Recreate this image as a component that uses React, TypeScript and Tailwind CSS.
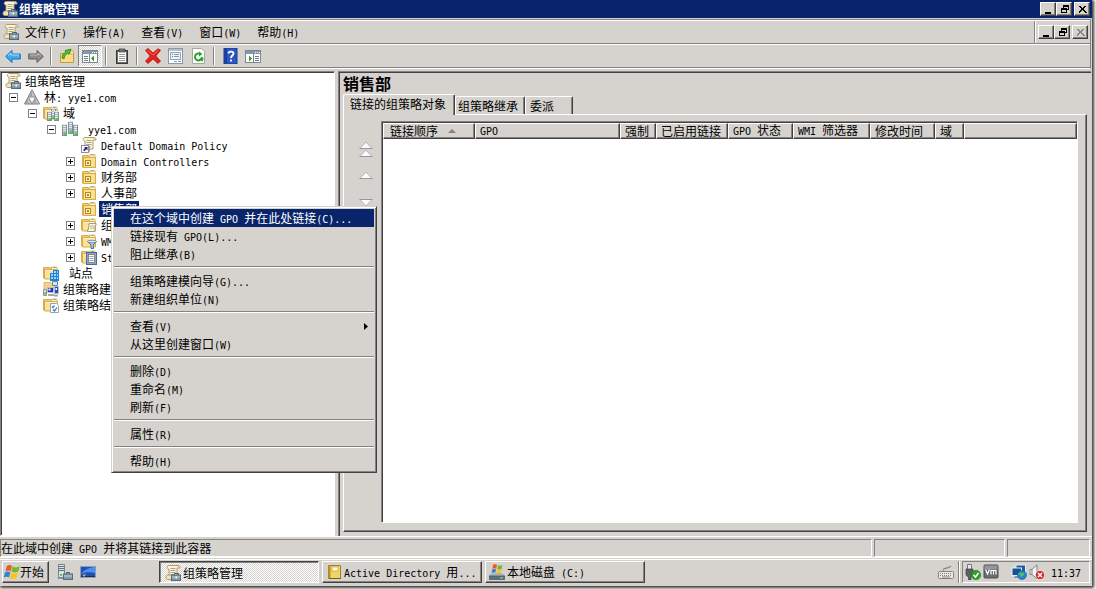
import React from 'react';
import { clsx } from 'clsx';

const RAISED = 'border border-t-white border-l-white border-r-[#424142] border-b-[#424142] shadow-[inset_-1px_-1px_0_#848284] bg-[#d6d3ce]';
const SUNKEN = 'border border-t-[#848284] border-l-[#848284] border-r-white border-b-white';
const DITHER = 'bg-[repeating-conic-gradient(#fff_0_25%,#d6d3ce_0_50%)] bg-[length:2px_2px]';

// Latin runs are set in a half-width face so that two of them fill one Chinese cell
function Label({ children }: { children: string }) {
  const parts = children.split(/([\x20-\x7e]+)/).filter(Boolean);
  return (
    <span className="whitespace-pre">
      {parts.map((part, i) =>
        /[\x20-\x7e]/.test(part) ? (
          <span key={i} className="font-['DejaVu_Sans_Mono',monospace] text-[10px]">{part}</span>
        ) : (
          part
        )
      )}
    </span>
  );
}

function Svg({ children, size = 16 }: { children: React.ReactNode; size?: number }) {
  return (
    <svg width={size} height={size} viewBox="0 0 16 16" className="block shrink-0" aria-hidden="true">
      {children}
    </svg>
  );
}

/* ---------- icons ---------- */

const ScrollShape = () => (
  <>
    <path d="M3.500.5h9.500a2 2 0 0 1 2 2.500h-3v9H4V4C2 4 1.500 1.500 3.500.5z" fill="#fbf3d8" stroke="#b09c68" />
    <path d="M12 3V1.500h2.500V3z" fill="#d9c489" />
    <path d="M5.500 3.500h5M5.500 5.500h5M5.500 7.500h5M5.500 9.500h4" stroke="#aaa289" />
    <path d="M1 12.500c0-1.500.8-2.500 2-2.500h5.500v4.500H2.500c-1 0-1.500-1-1.500-2z" fill="#efe3bb" stroke="#b09c68" />
  </>
);

const PolicyIcon = () => (
  <Svg>
    <ScrollShape />
    <path d="M9.500 10V8.500h4V10" fill="none" stroke="#4a5966" />
    <rect x="6.500" y="10" width="9" height="5.500" fill="#8299ab" stroke="#566a7a" />
    <path d="M7 12h8" stroke="#c3d2dc" />
    <path d="M10.500 11.500h1.500v2h-1.500z" fill="#fff" />
  </Svg>
);

const PolicyLinkIcon = () => (
  <Svg>
    <ScrollShape />
    <rect x=".5" y="8.500" width="7" height="7" fill="#fff" stroke="#8c8ea5" />
    <path d="M3 10h3.500v3.500L5.300 12.300 3.200 14.300 2 13.100l2.100-2z" fill="#1b1d8f" />
  </Svg>
);

const ForestIcon = () => (
  <Svg>
    <path d="M8 .8 15.500 15H.5z" fill="#c6c6c6" stroke="#7d7d7d" />
    <path d="M4.300 8h7.400L8 14.800z" fill="#f8f8f8" stroke="#8a8a8a" />
    <path d="M8 2.500 5.500 7.500H8z" fill="#9f9f9f" />
    <path d="M4 9.500 1.500 14.500H4zM12 9.500 9.500 14.500H12z" fill="#9f9f9f" />
  </Svg>
);

const FolderShape = () => (
  <>
    <path d="M.5 2.500h7l1 1.500v9H.5z" fill="#f3cf72" stroke="#d9ab4a" />
    <path d="M8.500 2h5.500v3H8.500z" fill="#fff3cf" stroke="#d9ab4a" strokeWidth=".8" />
    <path d="M10.500 2.500h2" stroke="#4ba0dd" />
    <path d="M1.500 4.500h13v9.500h-13z" fill="#fbe29a" stroke="#d9ab4a" />
    <path d="M2.500 5.500h11" stroke="#fff4cd" />
  </>
);

const Server = ({ x, y, h }: { x: number; y: number; h: number }) => (
  <g transform={`translate(${x} ${y})`}>
    <rect x=".5" y=".5" width="4" height={h - 1} fill="#a9b6be" stroke="#7f8e97" />
    <path d="M0 .5h5" stroke="#dfe5e8" />
    <path d="M1 2.500h3M1 4.500h3M1 6.500h3" stroke="#e6ebee" />
    <rect x="2" y={h - 3} width="2" height="2" fill="#3fdc1c" />
  </g>
);

const DomainsIcon = () => (
  <Svg>
    <FolderShape />
    <Server x={8} y={3} h={11} />
    <Server x={4} y={6} h={10} />
    <Server x={11} y={6} h={10} />
  </Svg>
);

const DomainIcon = () => (
  <Svg>
    <Server x={6} y={0} h={13} />
    <Server x={0} y={3} h={12} />
    <Server x={11} y={3} h={12} />
  </Svg>
);

const OuIcon = () => (
  <Svg>
    <path d="M1.500 2.500h6l1 2-1 9.500h-6z" fill="#f3cf72" stroke="#d9ab4a" />
    <path d="M9 1.500h5v3H9z" fill="#fff3cf" stroke="#d9ab4a" strokeWidth=".8" />
    <path d="M10.500 2h2" stroke="#4ba0dd" />
    <rect x="2.500" y="4.500" width="12" height="10" fill="#fae08f" stroke="#d9ab4a" />
    <rect x="4.500" y="7.500" width="5" height="5" fill="#ffeeb0" stroke="#b38a2c" />
    <path d="M6 9h2v2H6z" fill="#b38a2c" />
  </Svg>
);

const FolderScrollIcon = () => (
  <Svg>
    <FolderShape />
    <path d="M8 6.500h7v2h-1v6H6.500v-2h1z" fill="#fbf6e4" stroke="#a39a7b" />
    <path d="M9 9h4M9 11h4" stroke="#bdb493" />
  </Svg>
);

const FolderFilterIcon = () => (
  <Svg>
    <FolderShape />
    <path d="M6.500 8.500h9l-3 3.500v3.500h-2.500V12z" fill="#a9c6dd" stroke="#50738f" />
    <ellipse cx="11" cy="8.500" rx="4.500" ry="1.200" fill="#e2eef7" stroke="#50738f" strokeWidth=".7" />
  </Svg>
);

const FolderGpoIcon = () => (
  <Svg>
    <FolderShape />
    <rect x="5.500" y="3.500" width="10" height="12" fill="#7fa8d2" stroke="#456f9f" />
    <rect x="7.500" y="5.500" width="6" height="8" fill="#fff" stroke="#a3593a" strokeWidth=".7" />
    <path d="M8.500 7.500h4M8.500 9.500h4M8.500 11.500h4" stroke="#8ba4bf" />
  </Svg>
);

const SitesIcon = () => (
  <Svg>
    <FolderShape />
    <path d="M7 8h3V5h6v11H7z" fill="#1f82d6" />
    <path d="M8 10h2M11 7h2M14 7h1M11 10h2M14 10h1M8 13h2M11 13h2M14 13h1" stroke="#9fd4f8" strokeWidth="2" />
  </Svg>
);

const ModelingIcon = () => (
  <Svg>
    <path d="M1 1.500h7l1 1h4V10H1z" fill="#f3d486" stroke="#d0a145" strokeWidth=".7" />
    <path d="M9.500.5h5v4h-5z" fill="#d8e6ee" stroke="#6f8594" />
    <path d="M4.500 6.500h6v5h-6z" fill="#2433b4" stroke="#b8c1c8" />
    <path d="M11.500 5.500h4v7h-4z" fill="#2c47c9" stroke="#b8c1c8" />
    <path d="M.5 8.500h3v6h-3z" fill="#d5dbdf" stroke="#8a98a1" />
    <path d="M1 11.500h2v2H1z" fill="#3fdc1c" />
    <path d="M5 14h6M11 14.500h4" stroke="#9eabb3" strokeWidth="2" />
    <path d="M5.500 7.500h2v2h-2zM12.500 7h1.500v2h-1.500z" fill="#fff" />
  </Svg>
);

const ResultsIcon = () => (
  <Svg>
    <FolderShape />
    <path d="M7.500 6.500h6l2 2v7h-8z" fill="#fff" stroke="#9aa2a8" />
    <path d="M9 9.500l1 1 1.500-2M10 12.500l1.500 1.500 2.500-3.500" fill="none" stroke="#2d76c2" strokeWidth="1.200" />
  </Svg>
);

const Arrow = ({ back }: { back?: boolean }) => (
  <Svg>
    <path
      d={back ? 'M.7 8.500 7 2.500v3.500h8.300v5H7v3.500z' : 'M15.300 8.500 9 2.500v3.500H.7v5H9v3.500z'}
      fill={back ? '#3aaef0' : '#8d8d8d'}
      stroke={back ? '#1d6fb5' : '#5d5d5d'}
    />
    <path d={back ? 'M3 7.500 6 5v2h8' : 'M2 7h8V5l3 2.500'} fill="none" stroke={back ? '#a6ddfb' : '#bdbdbd'} />
  </Svg>
);

const FolderUpIcon = () => (
  <Svg>
    <path d="M1.500 5.500h5l1-1.500h7v10.500h-13z" fill="#f8dc8a" stroke="#c99a35" />
    <path d="M11 3h3.500v3H11z" fill="#fff1bd" stroke="#c99a35" strokeWidth=".7" />
    <path d="M3 10c0-3 1.500-5 4-5.500L6 2.500 12 1 10 6.500 8.800 5.500C6.500 6.500 5.500 8 5 11z" fill="#4cc02f" stroke="#2b8a1b" strokeWidth=".8" />
  </Svg>
);

const PaneIcon = ({ flip }: { flip?: boolean }) => (
  <Svg>
    <rect x=".5" y="2.500" width="15" height="12" fill="#fff" stroke="#7a8793" />
    <path d="M1 3h14v3H1z" fill="#8596a8" />
    <path d="M10 4.500h1M12 4.500h1M14 4.500h1" stroke="#fff" />
    <path d={flip ? 'M8.500 6v8' : 'M7.500 6v8'} stroke="#7a8793" />
    <path d={flip ? 'M10 8.500h4M10 10.500h4M10 12.500h4' : 'M2 8.500h4M2 10.500h4M2 12.500h4'} stroke="#6e7b87" />
    <path d={flip ? 'M4 7.500 7 10.500l-3 3z' : 'M12 7.500 9 10.500l3 3z'} fill="#2f9e1d" />
  </Svg>
);

const ClipboardIcon = () => (
  <Svg>
    <rect x="2.500" y="2.500" width="11" height="13" fill="#6a6a6a" stroke="#3c3c3c" />
    <path d="M4 4h8v10H4z" fill="#fff" />
    <path d="M5 1h6v3H5z" fill="#777" stroke="#333" strokeWidth=".7" />
    <path d="M5 6.500h6M5 8.500h6M5 10.500h6M5 12.500h6" stroke="#999" />
  </Svg>
);

const DeleteIcon = () => (
  <Svg>
    <path d="M.5 2.500 3 .5l5 4.500L13 .8l2.500 1.500L10.800 8l4.700 5-2.500 2.500L8 11l-5 4.500L.5 13.200 5.200 8z" fill="#e3231b" stroke="#b3120e" strokeWidth=".8" />
    <path d="M2.500 2.500 8 7l5-4.500" stroke="#f57a70" fill="none" strokeWidth=".8" />
  </Svg>
);

const PropertiesIcon = () => (
  <Svg>
    <rect x=".5" y=".5" width="14" height="15" fill="#fff" stroke="#8b98a5" />
    <path d="M1 2h13" stroke="#b5bfc8" strokeWidth="2" />
    <rect x="2.500" y="4.500" width="10" height="7" fill="#eef3f7" stroke="#95a4b2" />
    <path d="M4 6.500h1M4 8.500h1" stroke="#2f86cf" />
    <path d="M6 6.500h5M6 8.500h5" stroke="#8b98a5" />
    <path d="M6 13.500h3M10 13.500h3" stroke="#43b4e8" />
  </Svg>
);

const RefreshIcon = () => (
  <Svg>
    <path d="M1.500.5h9l3 3v12h-12z" fill="#fff" stroke="#a5a5a5" />
    <path d="M11 9a3.500 3.500 0 1 1-2-3.200M10 11.500l-2 .8" fill="none" stroke="#2da327" strokeWidth="2" />
    <path d="M8 3.500 11.500 6 8 8.500zM9 10l4 .5-2 3.500z" fill="#2da327" />
  </Svg>
);

const HelpIcon = () => (
  <Svg>
    <path d="M2 0h13v16H2z" fill="#2c56c0" stroke="#143a94" />
    <path d="M2 0h3v16H2z" fill="#1a3f9e" />
    <path d="M6.500 5.500c0-2.500 5-2.500 5 0 0 2-2.500 2-2.500 4.500M9 11.500v2" fill="none" stroke="#fff" strokeWidth="1.800" />
  </Svg>
);

const WindowsLogo = () => (
  <Svg>
    <path d="M2.800 2C5 .6 6.500 1 8 2L6.600 7.300C5 6.200 3.500 6.200 1.400 7.300z" fill="#ee5a24" />
    <path d="M8.800 2.600c2.200 1.200 4.500 1.100 7-.3L14.300 7.600c-2.500 1.300-4.700 1.200-7 0z" fill="#74b92c" />
    <path d="M1.100 8.300c2-1.100 3.700-1 5.200 0L4.900 13.600C3.500 12.500 2 12.500-.3 13.600z" fill="#2f83dc" />
    <path d="M7 8.700c2.200 1.200 4.500 1.200 7 0L12.500 14c-2.400 1.300-4.600 1.200-6.900 0z" fill="#fbc11d" />
  </Svg>
);

const ServerManagerIcon = () => (
  <Svg>
    <path d="M1.500.5h6v13h-6z" fill="#dde2e5" stroke="#75828b" />
    <path d="M2 2.500h5M2 4.500h5M2 6.500h5" stroke="#62717c" />
    <path d="M.5 14.500h8" stroke="#8f9ba3" />
    <path d="M3 10h2v2H3z" fill="#3fdc1c" />
    <path d="M9.500 10V8.500h3V10" fill="none" stroke="#4a5966" />
    <rect x="6.500" y="10" width="9" height="5.500" fill="#8299ab" stroke="#566a7a" />
    <path d="M7 12h8" stroke="#c3d2dc" />
  </Svg>
);

const DesktopIcon = () => (
  <Svg>
    <rect x=".5" y="2.500" width="15" height="11" fill="#1d50b8" stroke="#8ba0bd" />
    <path d="M1 10C5 5 10 3.500 15 3v6c-5-1-9-1-14 1z" fill="#4c91e6" />
    <path d="M1 12.500h14" stroke="#1c2c52" />
    <path d="M3 10.500h2v2H3z" fill="#f3a32b" />
    <path d="M5 10.500h1v1H5z" fill="#72ca3d" />
  </Svg>
);

const BookIcon = () => (
  <Svg>
    <path d="M2.500 1.500h12v13h-12z" fill="#f0d469" stroke="#a07f1d" />
    <path d="M2.500 1.500h2v13h-2z" fill="#b8942a" />
    <rect x="6" y="3" width="6" height="4" fill="#fffbe5" stroke="#c4a23c" strokeWidth=".7" />
    <path d="M3 14.500h12" stroke="#7a6015" />
  </Svg>
);

const DiskIcon = () => (
  <Svg>
    <path d="M4 .8C5.500 0 7 .3 8 .8L7.300 4.700C6 4 5 4 3.500 4.700z" fill="#ee5a24" />
    <path d="M9 1.300c1.500.6 3 .5 4.500 0L12.500 5.200c-1.500.5-3 .5-4.300 0z" fill="#74b92c" />
    <path d="M3.200 5.400c1.500-.6 2.500-.5 3.800 0L6.300 9C5 8.400 4 8.400 2.500 9z" fill="#2f83dc" />
    <path d="M8 6c1.300.5 2.800.5 4.300 0l-.9 3.600c-1.500.5-3 .5-4.100 0z" fill="#fbc11d" />
    <path d="M2.500 10h11l2 2H.5z" fill="#c3cdd3" stroke="#7d8b94" strokeWidth=".7" />
    <path d="M.5 12h15v3.500H.5z" fill="#5b7182" stroke="#3f5260" strokeWidth=".7" />
    <path d="M11 13h3v1.500h-3z" fill="#55e04a" />
  </Svg>
);

const KeyboardIcon = () => (
  <Svg>
    <path d="M5 6.500c1-3 3-2 4-2.500s2-.5 4-2" fill="none" stroke="#85837e" strokeWidth="1.200" />
    <rect x=".5" y="7.500" width="15" height="7" rx="1" fill="#e9e7e3" stroke="#85837e" />
    <path d="M2 9.500h12M2 11.500h12" stroke="#85837e" strokeDasharray="1 1" />
    <path d="M4 13h8" stroke="#85837e" />
  </Svg>
);

const SafeRemoveIcon = () => (
  <Svg>
    <path d="M2.500.5h4v5h-4z" fill="#e8e8e8" stroke="#777" />
    <path d="M1 5h7v5c0 2-1 2-2 3v3H3.500v-3C2 12 1 12 1 10z" fill="#5d6063" stroke="#3f4245" strokeWidth=".7" />
    <circle cx="11" cy="11" r="4.700" fill="#2ea12a" stroke="#1d7a1b" strokeWidth=".6" />
    <path d="M8.500 11l2 2 3-4" fill="none" stroke="#fff" strokeWidth="1.500" />
  </Svg>
);

const VmIcon = () => (
  <Svg>
    <rect x="1" y="1" width="14" height="13" rx="1" fill="#6a6d70" stroke="#4c4f52" />
    <path d="M1.500 1.500h13v4h-13z" fill="#93979a" />
    <path d="M2.500 5.500 4.500 10 6.500 5.500M8 10.500V6.500h5v4M10.500 6.500v4" fill="none" stroke="#fff" strokeWidth="1.200" />
  </Svg>
);

const NetworkIcon = () => (
  <Svg>
    <rect x="5" y="1" width="9.500" height="8" fill="#1e5b9f" stroke="#e7edf2" />
    <rect x="1" y="4" width="9.500" height="7.500" fill="#174f93" stroke="#e7edf2" />
    <path d="M3 13.500h6M4 12.500h4" stroke="#8795a1" />
    <circle cx="11" cy="11" r="4.500" fill="#2583d8" stroke="#155a9c" strokeWidth=".6" />
    <path d="M8 9c2-1 2 1 3.500 0s2 1 1 2-3 3-3 1-2-1-1.500-3z" fill="#5cc746" />
  </Svg>
);

const MutedIcon = () => (
  <Svg>
    <path d="M1 5.500h2L8 .8v14L3 10.500H1z" fill="#f4f6f7" stroke="#7b838a" />
    <path d="M3 5.500v5" stroke="#7b838a" />
    <circle cx="11" cy="11" r="4.600" fill="#d92b25" stroke="#fff" strokeWidth=".6" />
    <path d="M9 9l4 4M13 9l-4 4" stroke="#fff" strokeWidth="1.500" />
  </Svg>
);

/* ---------- window chrome ---------- */

const GLYPHS = {
  min: <path d="M3 9h6v2H3z" fill="currentColor" />,
  restore: (
    <path d="M5 2h6v5H9v3H3V5h2zM6 4v1h3v1h1V4zM4 7v2h4V7z" fill="currentColor" fillRule="evenodd" />
  ),
  close: <path d="M3 3l7 7M4 3l6.500 7M10 3l-7 7M9.500 3 3 9.500" stroke="currentColor" />,
};

function CaptionButton({ kind, label, disabled }: { kind: keyof typeof GLYPHS; label: string; disabled?: boolean }) {
  return (
    <button
      aria-label={label}
      disabled={disabled}
      className={clsx('flex h-3.5 w-4 items-center justify-center', RAISED, disabled ? 'text-[#848284]' : 'text-black', kind === 'close' && 'ml-0.5')}
    >
      <svg width="13" height="12" viewBox="0 0 13 12" className="block shrink-0" shapeRendering="crispEdges">{GLYPHS[kind]}</svg>
    </button>
  );
}

const Divider = () => (
  <div className="px-[3px]">
    <div className="h-[18px] w-0.5 border-l border-[#848284] bg-white" />
  </div>
);

function ToolButton({ label, pressed, children }: { label: string; pressed?: boolean; children: React.ReactNode }) {
  return (
    <button aria-label={label} className={clsx('flex h-[22px] items-center justify-center', pressed ? `w-6 ${SUNKEN} ${DITHER}` : 'w-[23px]')}>
      {children}
    </button>
  );
}

function Toolbar() {
  return (
    <div className="flex h-6 items-center border-t border-b border-t-white border-b-[#848284] pl-px">
      <ToolButton label="后退"><Arrow back /></ToolButton>
      <ToolButton label="前进"><Arrow /></ToolButton>
      <Divider />
      <ToolButton label="向上一级"><FolderUpIcon /></ToolButton>
      <ToolButton label="显示/隐藏控制台树" pressed><PaneIcon /></ToolButton>
      <Divider />
      <ToolButton label="复制"><ClipboardIcon /></ToolButton>
      <Divider />
      <ToolButton label="删除"><DeleteIcon /></ToolButton>
      <ToolButton label="属性"><PropertiesIcon /></ToolButton>
      <ToolButton label="刷新"><RefreshIcon /></ToolButton>
      <Divider />
      <ToolButton label="帮助"><HelpIcon /></ToolButton>
      <ToolButton label="显示/隐藏操作窗格"><PaneIcon flip /></ToolButton>
    </div>
  );
}

/* ---------- console tree ---------- */

interface TreeNode {
  label: string;
  level: number;
  icon: React.ComponentType;
  box?: 'open' | 'closed';
  selected?: boolean;
}

const TREE: TreeNode[] = [
  { label: '组策略管理', level: 0, icon: PolicyIcon },
  { label: '林: yye1.com', level: 1, icon: ForestIcon, box: 'open' },
  { label: '域', level: 2, icon: DomainsIcon, box: 'open' },
  { label: ' yye1.com', level: 3, icon: DomainIcon, box: 'open' },
  { label: 'Default Domain Policy', level: 4, icon: PolicyLinkIcon },
  { label: 'Domain Controllers', level: 4, icon: OuIcon, box: 'closed' },
  { label: '财务部', level: 4, icon: OuIcon, box: 'closed' },
  { label: '人事部', level: 4, icon: OuIcon, box: 'closed' },
  { label: '销售部', level: 4, icon: OuIcon, selected: true },
  { label: '组', level: 4, icon: FolderScrollIcon, box: 'closed' },
  { label: 'WM', level: 4, icon: FolderFilterIcon, box: 'closed' },
  { label: 'St', level: 4, icon: FolderGpoIcon, box: 'closed' },
  { label: ' 站点', level: 2, icon: SitesIcon },
  { label: '组策略建', level: 2, icon: ModelingIcon },
  { label: '组策略结', level: 2, icon: ResultsIcon },
];

// level 0 has no expander column
const INDENT = ['pl-[3px]', 'pl-[7px]', 'pl-[26px]', 'pl-[45px]', 'pl-16'];

function ConsoleTree() {
  return (
    <ul className="mr-[3px] w-[335px] shrink-0 overflow-hidden border border-t-[#848284] border-r-white border-b-white border-l-[#848284] bg-white shadow-[inset_1px_1px_0_#424142] pt-px pl-px">
      {TREE.map((node) => (
        <li key={node.label} className={clsx('flex h-4 items-center', INDENT[node.level])}>
          {node.level > 0 && (
            <span className="flex w-[15px] shrink-0">
              {node.box && (
                <button aria-label={node.box === 'open' ? '折叠' : '展开'}>
                  <svg width="9" height="9" viewBox="0 0 9 9" className="block" shapeRendering="crispEdges">
                    <rect x=".5" y=".5" width="8" height="8" fill="#fff" stroke="#848284" />
                    <path d={node.box === 'open' ? 'M2 4.500h5' : 'M2 4.500h5M4.500 2v5'} stroke="#000" />
                  </svg>
                </button>
              )}
            </span>
          )}
          <node.icon />
          <span className={clsx('ml-0.5 px-0.5', node.selected && 'bg-[#08246b] text-white')}>
            <Label>{node.label}</Label>
          </span>
        </li>
      ))}
    </ul>
  );
}

/* ---------- result pane ---------- */

const COLUMNS = [
  { label: '链接顺序', width: 'w-[92px]', sorted: true },
  { label: 'GPO', width: 'w-[145px]' },
  { label: '强制', width: 'w-9' },
  { label: '已启用链接', width: 'w-[72px]' },
  { label: 'GPO 状态', width: 'w-[65px]' },
  { label: 'WMI 筛选器', width: 'w-[77px]' },
  { label: '修改时间', width: 'w-[65px]' },
  { label: '域', width: 'w-[29px]' },
  { label: '', width: 'w-auto' },
];

function LinkTable() {
  return (
    <div className="min-w-0 flex-1 border border-t-[#848284] border-r-white border-b-white border-l-[#848284] bg-white pt-px pl-px shadow-[inset_1px_1px_0_#424142]">
      <table className="w-full table-fixed border-separate border-spacing-0">
        <thead>
          <tr>
            {COLUMNS.map((col) => (
              <th key={col.label} scope="col" className={clsx('h-4 p-0 text-left font-normal', RAISED, col.width)}>
                <span className={clsx('flex h-3.5 items-center gap-2.5 leading-4', col.sorted ? 'pl-1.5' : 'pl-1')}>
                  <Label>{col.label}</Label>
                  {col.sorted && (
                    <svg width="8" height="4" viewBox="0 0 8 4" className="block"><path d="M4 0l4 4H0z" fill="#848284" /></svg>
                  )}
                </span>
              </th>
            ))}
          </tr>
        </thead>
        <tbody />
      </table>
    </div>
  );
}

const Triangle = ({ down }: { down?: boolean }) => (
  <svg width="14" height="8" viewBox="0 0 14 8" className="block">
    <path d={down ? 'M1 .5h12L7 7z' : 'M1 7.500h12L7 1z'} fill="#fbfbfb" stroke="#b0aeb4" strokeWidth=".9" />
    <path d={down ? 'M.5 .5h13' : 'M.5 7.500h13'} stroke="#98969c" />
  </svg>
);

const TAB = 'border-t border-l border-r border-t-white border-l-white border-r-[#424142] shadow-[inset_-1px_0_0_#848284] rounded-t-[2px] text-left bg-[#d6d3ce]';

function ResultPane() {
  return (
    <section className="flex min-w-0 flex-1 flex-col border-t border-l border-[#848284] pt-px pr-1 pb-1 pl-1 shadow-[inset_1px_1px_0_#424142]">
      <h1 className="h-[21px] text-base leading-5 font-bold">销售部</h1>
      <div role="tablist" className="flex items-end">
        <button role="tab" aria-selected="true" className={clsx('z-10 -mb-px h-[21px] w-28 pb-0.5 pl-1.5', TAB)}>链接的组策略对象</button>
        <button role="tab" aria-selected="false" className={clsx('h-[18px] w-[70px] pl-0.5', TAB)}>组策略继承</button>
        <button role="tab" aria-selected="false" className={clsx('h-[18px] w-12 pl-1', TAB)}>委派</button>
      </div>
      <div className={clsx('flex flex-1 pt-1.5 pr-2 pb-2', RAISED)}>
        <div className="flex w-[37px] shrink-0 flex-col items-start pt-5 pl-[15px]">
          <button aria-label="移到顶部"><Triangle /><Triangle /></button>
          <button aria-label="上移" className="mt-3.5"><Triangle /></button>
          <button aria-label="下移" className="mt-5"><Triangle down /></button>
        </div>
        <LinkTable />
      </div>
    </section>
  );
}

/* ---------- context menu ---------- */

const MENU_GROUPS = [
  ['在这个域中创建 GPO 并在此处链接(C)...', '链接现有 GPO(L)...', '阻止继承(B)'],
  ['组策略建模向导(G)...', '新建组织单位(N)'],
  ['查看(V)', '从这里创建窗口(W)'],
  ['删除(D)', '重命名(M)', '刷新(F)'],
  ['属性(R)'],
  ['帮助(H)'],
];

function ContextMenu() {
  return (
    <div role="menu" className="absolute top-[206px] left-[111px] z-20 w-[266px] border border-t-[#d6d3ce] border-r-[#424142] border-b-[#424142] border-l-[#d6d3ce] bg-[#d6d3ce] p-0.5 shadow-[inset_1px_1px_0_#fff,inset_-1px_-1px_0_#848284]">
      {MENU_GROUPS.map((group, g) => (
        <React.Fragment key={group[0]}>
          {g > 0 && <div role="separator" className="mt-[3px] mb-1 h-0.5 border-t border-[#848284] bg-white" />}
          {group.map((item, i) => (
            <button
              key={item}
              role="menuitem"
              className={clsx('flex h-[18px] w-full items-center pr-1.5 pl-4', g === 0 && i === 0 && 'bg-[#08246b] text-white')}
            >
              <Label>{item}</Label>
              {item === '查看(V)' && (
                <svg width="4" height="7" viewBox="0 0 4 7" className="ml-auto"><path d="M0 0l4 3.500L0 7z" /></svg>
              )}
            </button>
          ))}
        </React.Fragment>
      ))}
    </div>
  );
}

/* ---------- task bar ---------- */

function TaskButton({ icon, label, active }: { icon: React.ReactNode; label: string; active?: boolean }) {
  return (
    <button
      className={clsx(
        'flex h-[22px] w-40 items-center gap-0.5',
        active
          ? `border border-t-[#424142] border-r-white border-b-white border-l-[#424142] pt-px pl-[5px] shadow-[inset_1px_1px_0_#848284] ${DITHER}`
          : `pl-[3px] ${RAISED}`
      )}
    >
      {icon}
      <Label>{label}</Label>
    </button>
  );
}

function Taskbar() {
  return (
    <footer className="h-[29px] border-t border-white pt-px">
      <div className="flex h-[27px] items-start border-t border-white pt-px pl-0.5">
        <button className={clsx('mr-2 flex h-[22px] w-[47px] items-center pl-px', RAISED)}>
          <WindowsLogo />
          开始
        </button>
        <button aria-label="服务器管理器" className="flex h-[22px] w-[23px] items-center"><ServerManagerIcon /></button>
        <button aria-label="显示桌面" className="flex h-[22px] w-[79px] items-center"><DesktopIcon /></button>
        <div className="flex flex-1 gap-[3px]">
          <TaskButton icon={<PolicyIcon />} label="组策略管理" active />
          <TaskButton icon={<BookIcon />} label="Active Directory 用..." />
          <TaskButton icon={<DiskIcon />} label="本地磁盘 (C:)" />
        </div>
        <div className="flex h-[22px] items-center gap-1">
          <KeyboardIcon />
          <div className="h-[22px] w-0.5 border-l border-[#848284] bg-white" />
        </div>
        <div className={clsx('mr-0.5 ml-0.5 flex h-[22px] w-32 items-center gap-0.5 pl-0.5', SUNKEN)}>
          <SafeRemoveIcon />
          <VmIcon />
          <span className="ml-2.5 flex gap-0.5"><NetworkIcon /><MutedIcon /></span>
          <time className="ml-1"><Label>11:37</Label></time>
        </div>
      </div>
    </footer>
  );
}

const MENUS = ['文件(F)', '操作(A)', '查看(V)', '窗口(W)', '帮助(H)'];

export default function App() {
  return (
    <div className="h-screen overflow-hidden bg-white pr-1 pb-[3px] font-['Noto_Sans_CJK_SC',sans-serif] text-xs text-black">
      <div className="relative flex h-full flex-col bg-[#d6d3ce] shadow-[1px_1px_3px_1px_#333]">
        <header className="flex h-[18px] shrink-0 items-center bg-[#08246b] pr-0.5 pl-0.5 text-white">
          <PolicyIcon />
          <span className="ml-px flex-1 font-bold">组策略管理</span>
          <CaptionButton kind="min" label="最小化" />
          <CaptionButton kind="restore" label="还原" />
          <CaptionButton kind="close" label="关闭" />
        </header>

        <div className="mt-px mr-px shrink-0 border-t border-r border-b border-t-[#848284] border-r-[#848284] border-b-white">
          <div className="flex h-6 items-center border-t border-b border-t-white border-b-[#848284] pl-[3px]">
            <PolicyIcon />
            <nav className="flex flex-1">
              {MENUS.map((menu) => (
                <button key={menu} className="mr-0.5 pr-2 pl-1.5"><Label>{menu}</Label></button>
              ))}
            </nav>
            <div className="flex h-full items-center border-l border-[#848284] pr-0.5">
              <div className="mr-0.5 h-full w-px bg-white" />
              <CaptionButton kind="min" label="最小化子窗口" />
              <CaptionButton kind="restore" label="还原子窗口" />
              <CaptionButton kind="close" label="关闭子窗口" disabled />
            </div>
          </div>
          <Toolbar />
        </div>

        <main className="mt-0.5 flex min-h-0 flex-1 pr-px">
          <ConsoleTree />
          <ResultPane />
        </main>

        <div className="flex gap-0.5 border-t border-white pt-0.5 pr-0.5">
          <div className={clsx('h-[18px] flex-1 leading-4', SUNKEN)}><Label>在此域中创建 GPO 并将其链接到此容器</Label></div>
          <div className={clsx('h-[18px] w-[131px]', SUNKEN)} />
          <div className={clsx('h-[18px] w-[83px]', SUNKEN)} />
        </div>

        <Taskbar />
        <ContextMenu />
      </div>
    </div>
  );
}
